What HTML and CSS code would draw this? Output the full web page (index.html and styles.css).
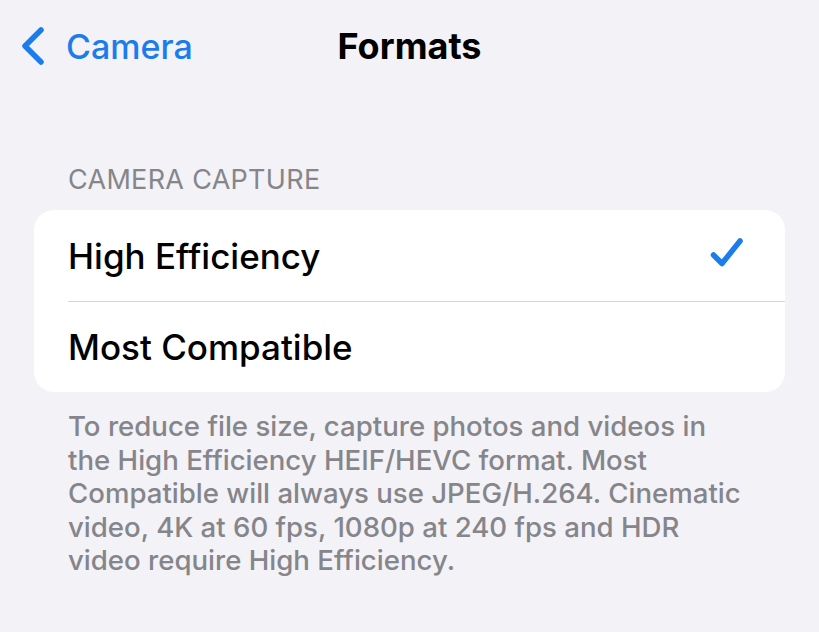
FILE: index.html
```html
<!DOCTYPE html>
<html>
<head>
<meta charset="utf-8">
<link rel="stylesheet" href="styles.css">
</head>
<body>
<div class="page">
  <header class="nav">
    <div class="back">
      <svg class="chev" width="26" height="40" viewBox="0 0 26 40"><path d="M21 4 L5 20 L21 36" fill="none" stroke="#1b7cec" stroke-width="5.5" stroke-linecap="round" stroke-linejoin="round"/></svg>
      <span class="back-label">Camera</span>
    </div>
    <div class="title">Formats</div>
  </header>
  <div class="section-label">CAMERA CAPTURE</div>
  <div class="card">
    <div class="row">
      <span class="row-text">High Efficiency</span>
      <svg class="check" width="36" height="34" viewBox="0 0 36 34"><path d="M4.5 19 L13 27.5 L31 5" fill="none" stroke="#1b7cec" stroke-width="5.5" stroke-linecap="round" stroke-linejoin="round"/></svg>
    </div>
    <div class="row">
      <span class="row-text">Most Compatible</span>
    </div>
  </div>
  <p class="footer">To reduce file size, capture photos and videos in the High Efficiency HEIF/HEVC format. Most Compatible will always use JPEG/H.264. Cinematic video, 4K at 60 fps, 1080p at 240 fps and HDR video require High Efficiency.</p>
</div>
</body>
</html>
```
FILE: styles.css
```css
html, body {
  margin: 0;
  padding: 0;
  background: #f2f2f7;
}
body {
  font-family: Inter, "Noto Sans", sans-serif;
  width: 819px;
  height: 632px;
  overflow: hidden;
}
.page {
  padding: 0 34px;
}
.nav {
  position: relative;
  height: 96px;
  display: flex;
  align-items: center;
}
.back {
  display: flex;
  align-items: center;
  gap: 20px;
  margin-left: -14px;
  margin-top: -4px;
}
.back-label {
  color: #1b7cec;
  font-size: 34px;
  font-weight: 500;
}
.title {
  position: absolute;
  left: 0;
  right: 0;
  top: 24px;
  text-align: center;
  font-size: 36px;
  font-weight: 700;
  color: #000;
  pointer-events: none;
}
.section-label {
  margin-top: 68px;
  padding-left: 34px;
  font-size: 27px;
  color: #85858a;
  letter-spacing: 0.3px;
  line-height: 32px;
}
.card {
  margin-top: 14px;
  background: #fff;
  border-radius: 20px;
  overflow: hidden;
}
.row {
  height: 91px;
  margin-left: 34px;
  padding-right: 40px;
  display: flex;
  align-items: center;
  justify-content: space-between;
  box-sizing: border-box;
}
.row + .row {
  border-top: 1.5px solid #d8d8dc;
}
.row-text {
  font-size: 35px;
  font-weight: 500;
  color: #000;
}
.check {
  margin-top: -6px;
}
.footer {
  margin: 18px 0 0;
  padding: 0 38px 0 34px;
  font-size: 27.6px;
  font-weight: 500;
  line-height: 33.5px;
  color: #85858a;
}
```
